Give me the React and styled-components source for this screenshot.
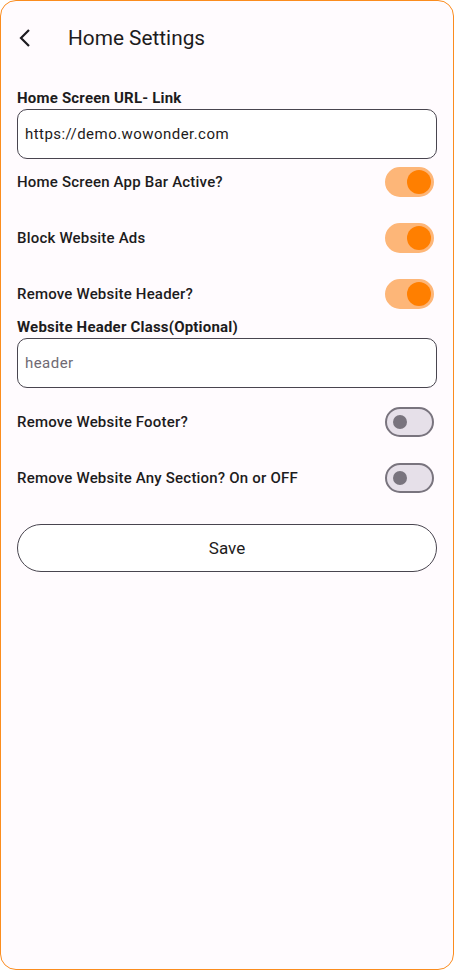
import { createGlobalStyle } from 'styled-components'
import styled from 'styled-components'

const GlobalStyle = createGlobalStyle`
  html, body {
    margin: 0;
    padding: 0;
    background: #fff;
  }
  body {
    font-family: Roboto, "Noto Sans", sans-serif;
    color: #1d1b20;
  }
`

const Frame = styled.div`
  box-sizing: border-box;
  width: 454px;
  height: 970px;
  border: 1px solid #fb8c1e;
  border-radius: 16px;
  background: #fffbfe;
  overflow: hidden;
`

const Header = styled.div`
  display: flex;
  align-items: center;
  height: 74px;
  padding-left: 14px;
`

const BackButton = styled.button`
  display: flex;
  align-items: center;
  justify-content: center;
  width: 20px;
  height: 24px;
  padding: 0;
  margin-right: 33px;
  border: none;
  background: none;
  color: #1d1b20;
`

const Title = styled.h1`
  margin: 0;
  font-size: 20.8px;
  font-weight: 400;
  color: #1d1b20;
`

const Content = styled.div`
  display: flex;
  flex-direction: column;
  padding: 0 16px;
`

const Label = styled.div`
  font-size: 15px;
  font-weight: 700;
  line-height: 18px;
  letter-spacing: 0.2px;
  margin-top: ${p => p.$top || 0}px;
  margin-bottom: 2px;
`

const Input = styled.input`
  box-sizing: border-box;
  width: 100%;
  height: 50px;
  padding: 0 7px;
  border: 1px solid #49454f;
  border-radius: 10px;
  background: #fff;
  font-family: Roboto, sans-serif;
  font-size: 15px;
  letter-spacing: 0.45px;
  color: #1d1b20;
  outline: none;
  &::placeholder {
    color: #6f6a73;
  }
`

const Row = styled.div`
  display: flex;
  align-items: center;
  justify-content: space-between;
  height: 46px;
  margin-top: ${p => p.$top || 0}px;
  font-size: 15px;
  font-weight: 500;
  letter-spacing: 0.2px;
`

const Track = styled.div`
  box-sizing: border-box;
  display: flex;
  align-items: center;
  justify-content: ${p => (p.$on ? 'flex-end' : 'flex-start')};
  width: 49px;
  height: 30px;
  margin-right: 3px;
  border-radius: 15px;
  border: 2px solid ${p => (p.$on ? '#fdb678' : '#79747e')};
  background: ${p => (p.$on ? '#fdb678' : '#e6e0e9')};
  padding: ${p => (p.$on ? '0 1px' : '0 6px')};
`

const Thumb = styled.div`
  width: ${p => (p.$on ? 24 : 14)}px;
  height: ${p => (p.$on ? 24 : 14)}px;
  border-radius: 50%;
  background: ${p => (p.$on ? '#ff7f00' : '#79747e')};
`

const SaveButton = styled.button`
  box-sizing: border-box;
  width: 100%;
  height: 48px;
  margin-top: 23px;
  border: 1px solid #49454f;
  border-radius: 24px;
  background: #fff;
  font-family: Roboto, sans-serif;
  font-size: 17px;
  color: #1d1b20;
`

const Switch = ({ on }) => (
  <Track $on={on}>
    <Thumb $on={on} />
  </Track>
)

const rowsA = [
  { label: 'Home Screen App Bar Active?', on: true },
  { label: 'Block Website Ads', on: true, top: 10 },
  { label: 'Remove Website Header?', on: true, top: 10 },
]

const rowsB = [
  { label: 'Remove Website Footer?', on: false, top: 11 },
  { label: 'Remove Website Any Section? On or OFF', on: false, top: 10 },
]

export default function App() {
  return (
    <>
      <GlobalStyle />
      <Frame>
        <Header>
          <BackButton>
            <svg width="14" height="20" viewBox="0 0 14 20">
              <polyline points="11,2 3,10 11,18" fill="none" stroke="#1d1b20" strokeWidth="2.2" />
            </svg>
          </BackButton>
          <Title>Home Settings</Title>
        </Header>
        <Content>
          <Label $top={14}>Home Screen URL- Link</Label>
          <Input defaultValue="https://demo.wowonder.com" />
          {rowsA.map(r => (
            <Row key={r.label} $top={r.top}>
              {r.label}
              <Switch on={r.on} />
            </Row>
          ))}
          <Label $top={1}>Website Header Class(Optional)</Label>
          <Input placeholder="header" />
          {rowsB.map(r => (
            <Row key={r.label} $top={r.top}>
              {r.label}
              <Switch on={r.on} />
            </Row>
          ))}
          <SaveButton>Save</SaveButton>
        </Content>
      </Frame>
    </>
  )
}
